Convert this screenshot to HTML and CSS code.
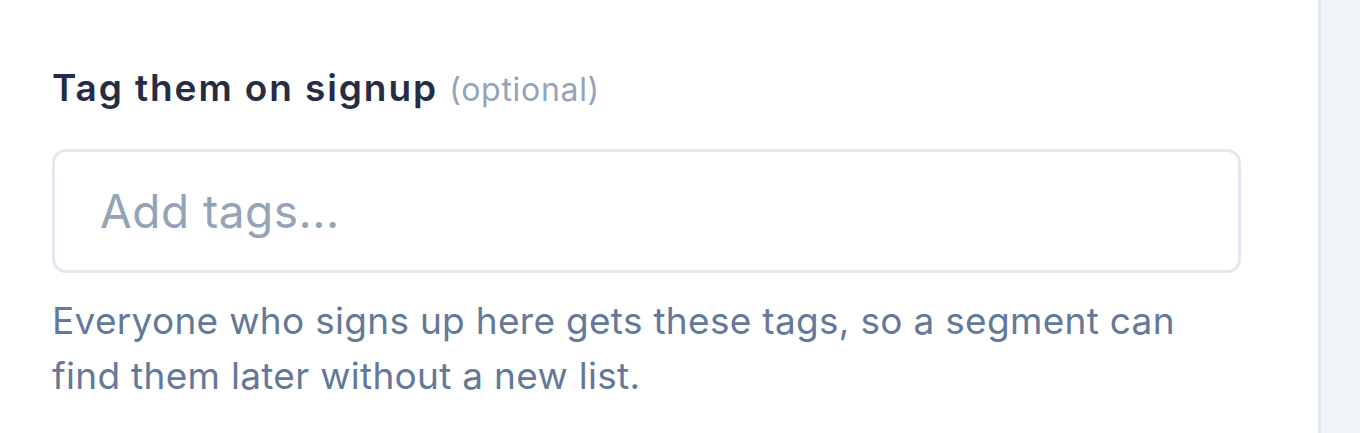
FILE: index.html
```html
<!DOCTYPE html>
<html lang="en">
<head>
<meta charset="utf-8">
<title>Tag them on signup</title>
<link rel="stylesheet" href="styles.css">
</head>
<body>
<div class="layout">
  <main class="main">
    <div class="field">
      <label class="label" for="tags">Tag them on signup <span class="optional">(optional)</span></label>
      <input class="input" id="tags" type="text" placeholder="Add tags...">
      <p class="help">Everyone who signs up here gets these tags, so a segment can find them later without a new list.</p>
    </div>
  </main>
  <aside class="side"></aside>
</div>
</body>
</html>
```

FILE: styles.css
```css
* { box-sizing: border-box; }
html, body { margin: 0; padding: 0; height: 100%; background: #ffffff; }
body { font-family: "Inter", "Open Sans", sans-serif; }
.layout { display: flex; height: 100%; }
.main { flex: 1; padding: 62px 77px 0 52px; }
.field { width: 1189px; display: flex; flex-direction: column; }
.label { font-size: 37px; font-weight: 600; color: #252d44; line-height: 52px; letter-spacing: 1.9px; }
.optional { font-weight: 400; color: #94a3b8; font-size: 32px; letter-spacing: 0.7px; }
.input { margin-top: 33px; height: 124px; border: 3px solid #e2e8f0; border-radius: 14px; padding: 0 45px; font-family: inherit; font-size: 46px; letter-spacing: 0.5px; color: #1e293b; outline: none; background: #fff; }
.input::placeholder { color: #94a3b8; }
.help { margin: 20px 0 0; font-size: 37px; line-height: 55px; letter-spacing: 0.3px; color: #647899; }
.side { width: 42px; flex: none; background: #f1f5f9; border-left: 3px solid #e2e8f0; }
```
